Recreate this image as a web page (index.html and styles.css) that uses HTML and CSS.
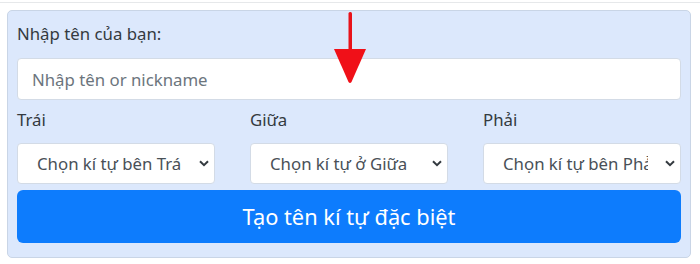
FILE: index.html
```html
<!DOCTYPE html>
<html lang="vi">
<head>
<meta charset="utf-8">
<link rel="stylesheet" href="styles.css">
</head>
<body>
<div class="topline"></div>
<div class="card">
  <label class="lbl">Nhập tên của bạn:</label>
  <div class="input"><span class="ph">Nhập tên or nickname</span></div>
  <div class="cols">
    <div class="col">
      <div class="lbl small">Trái</div>
      <div class="select"><span class="val">Chọn kí tự bên Trái</span><svg class="chev" viewBox="0 0 10 7" width="10" height="7"><path d="M1 1.2 L5 5.2 L9 1.2" fill="none" stroke="#343a40" stroke-width="2"/></svg></div>
    </div>
    <div class="col">
      <div class="lbl small">Giữa</div>
      <div class="select"><span class="val">Chọn kí tự ở Giữa</span><svg class="chev" viewBox="0 0 10 7" width="10" height="7"><path d="M1 1.2 L5 5.2 L9 1.2" fill="none" stroke="#343a40" stroke-width="2"/></svg></div>
    </div>
    <div class="col">
      <div class="lbl small">Phải</div>
      <div class="select"><span class="val">Chọn kí tự bên Phải</span><svg class="chev" viewBox="0 0 10 7" width="10" height="7"><path d="M1 1.2 L5 5.2 L9 1.2" fill="none" stroke="#343a40" stroke-width="2"/></svg></div>
    </div>
  </div>
  <div class="btn">Tạo tên kí tự đặc biệt</div>
</div>
<svg class="arrow" viewBox="0 0 34 72" width="34" height="72">
  <rect x="15.5" y="0" width="3.5" height="42" fill="#e8121a" rx="1.5"/>
  <path d="M1 37 L33 37 L18.5 70 Q17 72 15.5 70 Z" fill="#f01018"/>
</svg>
</body>
</html>
```
FILE: styles.css
```css
html, body {
  margin: 0;
  padding: 0;
  background: #ffffff;
  font-family: "Noto Sans", "Open Sans", sans-serif;
  color: #343a40;
}
body {
  position: relative;
  width: 700px;
  height: 264px;
  overflow: hidden;
}
.topline {
  height: 2px;
  border-bottom: 1px solid #e6e8ea;
}
.card {
  margin: 7px 8px 0 7px;
  width: 664px;
  background: #dce8fc;
  border: 1px solid #c9d5e6;
  border-radius: 5px;
  padding: 11px 9px 14px 9px;
  display: flex;
  flex-direction: column;
}
.lbl {
  display: block;
  font-size: 16.8px;
  line-height: 24px;
  color: #343a40;
  margin-bottom: 12px;
}
.input {
  height: 42px;
  box-sizing: border-box;
  background: #fff;
  border: 1px solid #d3dbe6;
  border-radius: 4px;
  display: flex;
  align-items: center;
  padding-left: 14px;
}
.ph {
  font-size: 16.8px;
  color: #6c757d;
}
.cols {
  display: grid;
  grid-template-columns: 198px 198px 198px;
  column-gap: 35px;
  margin-top: 8px;
}
.lbl.small {
  margin-bottom: 11px;
  line-height: 24px;
}
.select {
  height: 41px;
  background: #fff;
  border: 1px solid #d3dbe6;
  border-radius: 4px;
  display: flex;
  align-items: center;
  padding-left: 19px;
  padding-right: 4px;
  position: relative;
  box-sizing: border-box;
}
.val {
  font-size: 16.8px;
  color: #495057;
  white-space: nowrap;
  overflow: hidden;
  width: 145px;
  flex: none;
}
.chev {
  margin-left: auto;
  margin-right: 1px;
}
.btn {
  margin-top: 6px;
  height: 53px;
  background: #0d7cfd;
  border-radius: 6px;
  color: #fff;
  font-size: 21.8px;
  display: flex;
  align-items: center;
  justify-content: center;
}
.arrow {
  position: absolute;
  left: 333px;
  top: 12px;
}
```
